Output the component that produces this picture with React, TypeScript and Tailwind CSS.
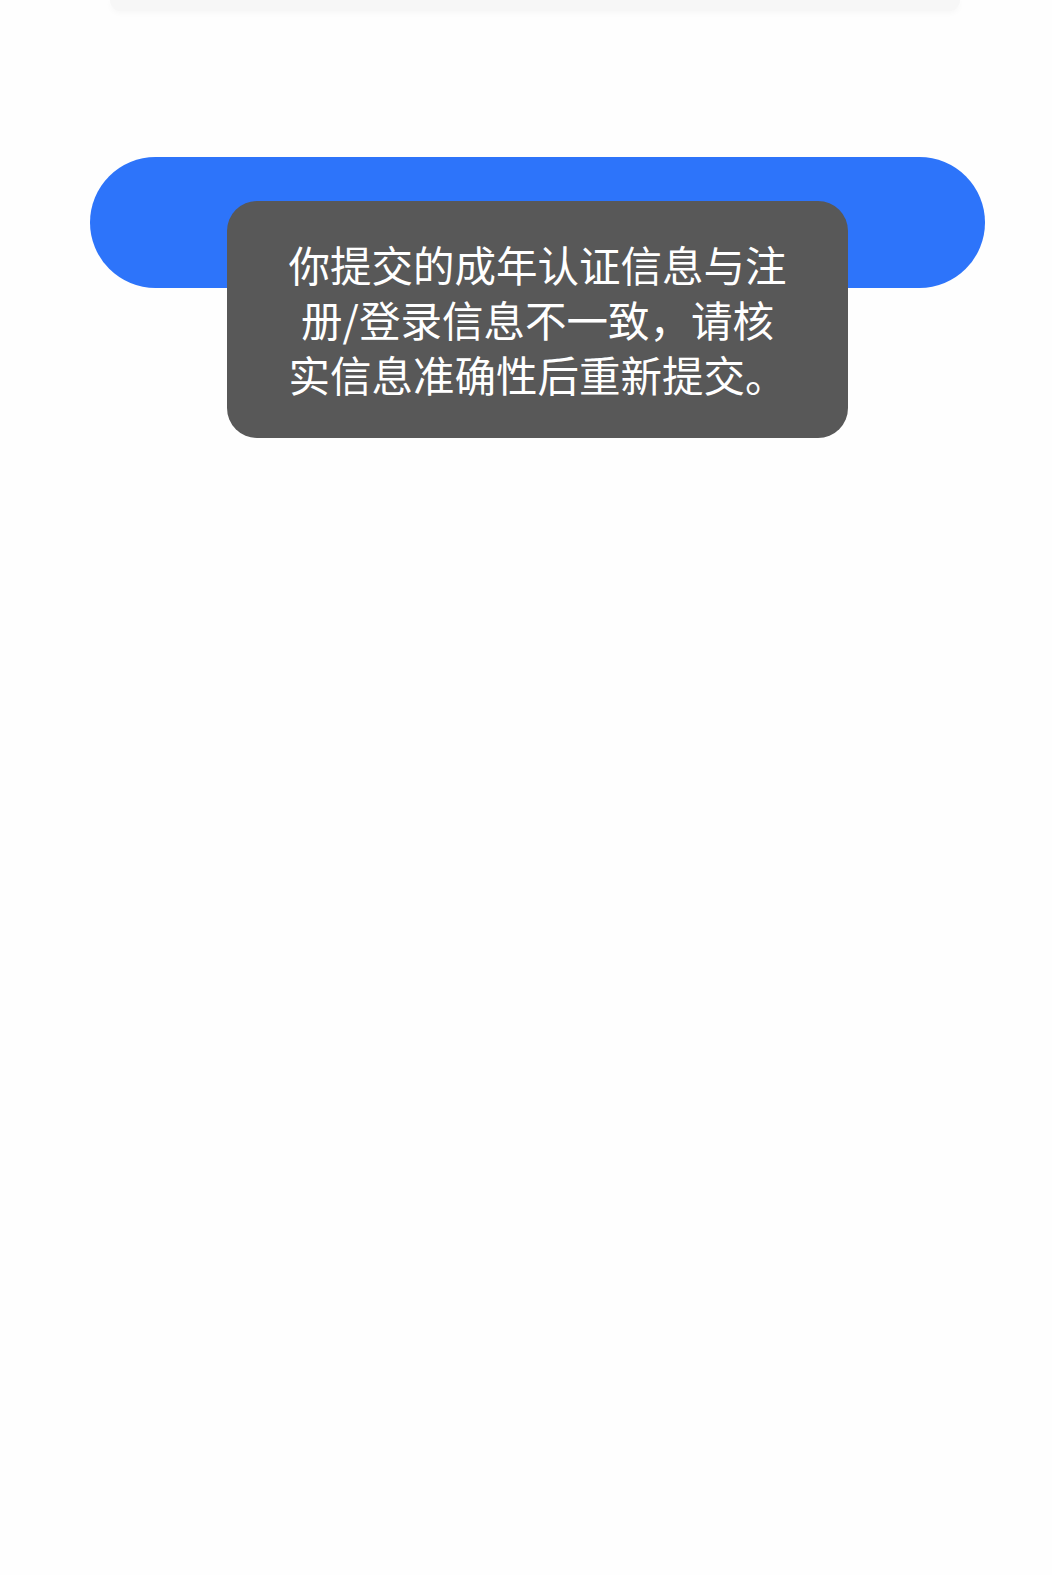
import React from "react";

export default function App() {
  return (
    <div
      className="relative w-[1052px] h-[1575px] bg-[#fefefe] overflow-hidden"
      style={{ fontFamily: '"Noto Sans CJK SC", "Noto Sans", sans-serif' }}
    >
      <div className="flex flex-col">
        <div className="ml-[110px] w-[850px] h-[11px] bg-[#f7f7f7] rounded-b-[26px] shadow-[0_2px_6px_rgba(0,0,0,0.03)]" />
        <div className="ml-[90px] mt-[146px] w-[895px] h-[131px] rounded-full bg-[#2d74fa]" />
      </div>
      <div className="absolute left-[227px] top-[201px] w-[621px] h-[237px] rounded-[30px] bg-[#585858] flex items-center justify-center px-[58px]">
        <p className="text-white text-[41.5px] leading-[55px] text-center tracking-[0px]">
          你提交的成年认证信息与注册/登录信息不一致，请核实信息准确性后重新提交。
        </p>
      </div>
    </div>
  );
}
